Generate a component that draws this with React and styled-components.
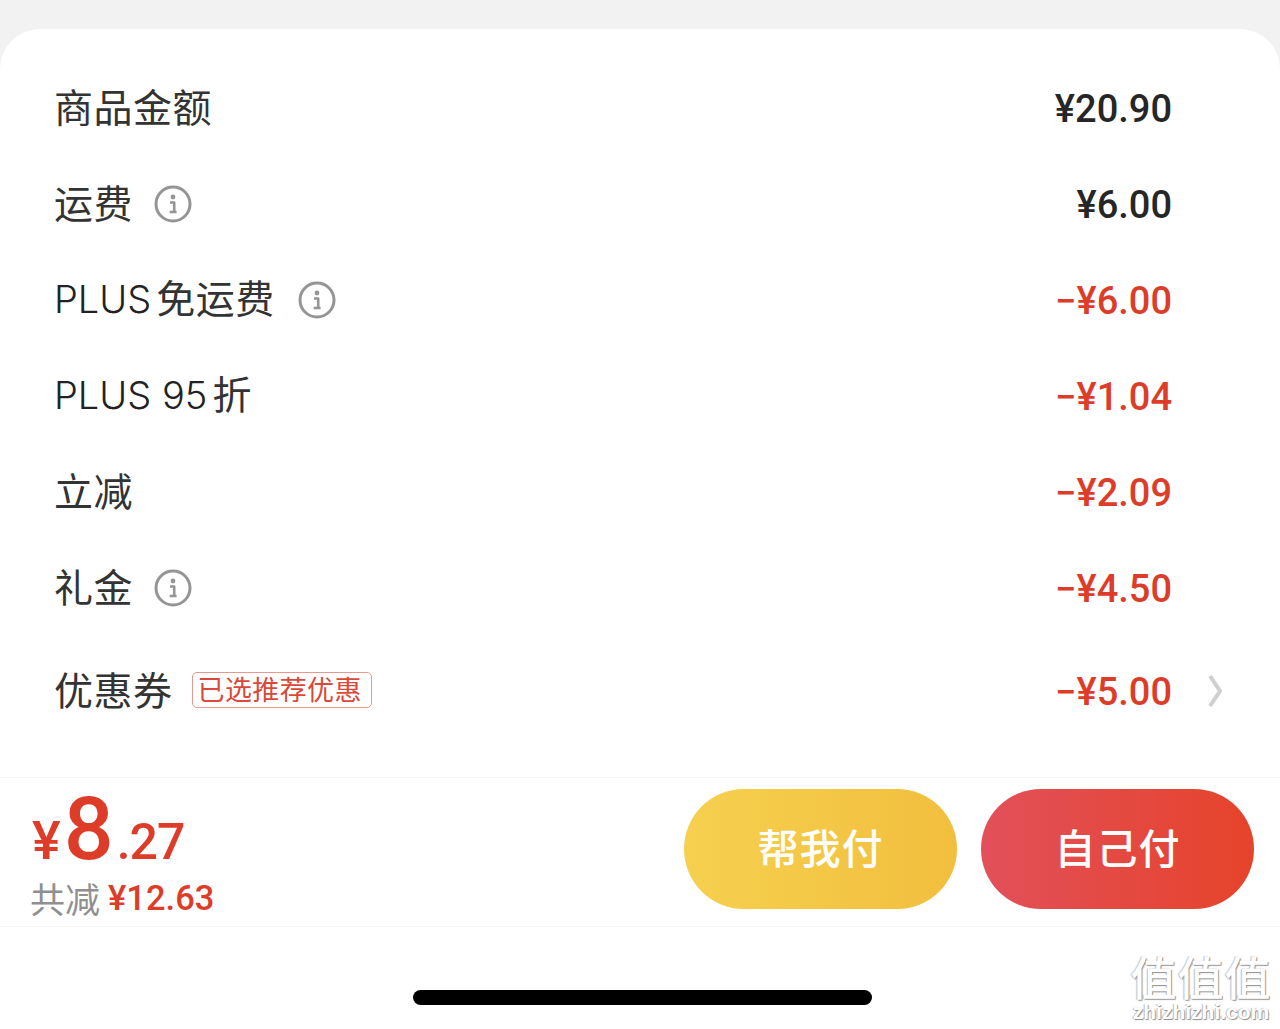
import React from "react"
import styled, { createGlobalStyle } from "styled-components"

const CJK = `"Noto Sans CJK SC", "Noto Sans", sans-serif`
const NUM = `Roboto, "Liberation Sans", sans-serif`
const RED = "#dd3d28"

const Global = createGlobalStyle`
  html, body { margin: 0; padding: 0; background: #f2f2f2; }
  body { width: 1280px; height: 1029px; overflow: hidden; font-family: ${CJK}; }
`

const Page = styled.div`
  position: relative;
  width: 1280px;
  height: 1029px;
  padding-top: 29px;
  box-sizing: border-box;
`

const Sheet = styled.div`
  height: 1000px;
  background: #fff;
  border-radius: 40px 40px 0 0;
  display: flex;
  flex-direction: column;
`

const List = styled.div`
  height: 748px;
  padding-top: 31px;
  box-sizing: border-box;
`

const Row = styled.div`
  height: ${p => (p.$tall ? 110 : 96)}px;
  display: flex;
  align-items: center;
  padding: 0 108px 0 54px;
  position: relative;
`

const Label = styled.span`
  font-size: 39px;
  font-weight: 400;
  line-height: 48px;
  letter-spacing: 0.5px;
  padding-bottom: 6px;
  color: #333;
`

const Latin = styled.span`
  font-family: Inter, sans-serif;
  font-size: 38px;
  font-weight: 300;
  letter-spacing: 0;
  color: #222;
  margin-right: 5px;
`

const InfoWrap = styled.span`
  display: flex;
  margin-left: ${p => p.$gap}px;
`

const Tag = styled.span`
  margin: 0 0 3px 19px;
  height: 36px;
  width: 180px;
  box-sizing: border-box;
  border: 1px solid #e8998d;
  border-radius: 5px;
  padding-left: 5px;
  color: #d9493a;
  font-size: 27px;
  font-weight: 400;
  line-height: 32px;
  letter-spacing: 0.4px;
  white-space: nowrap;
`

const Amount = styled.span`
  margin-left: auto;
  padding-top: 2px;
  font-family: ${NUM};
  font-size: 38px;
  font-weight: 500;
  line-height: 48px;
  color: ${p => (p.$red ? RED : "#262626")};
`

const Chevron = styled.svg`
  position: absolute;
  right: 57px;
  top: 38px;
`

const Bar = styled.div`
  height: 150px;
  box-sizing: border-box;
  border-top: 1px solid #f5f5f5;
  border-bottom: 1px solid #f5f5f5;
  display: flex;
  align-items: flex-start;
  padding: 11px 26px 0 30px;
`

const Totals = styled.div`
  display: flex;
  flex-direction: column;
  margin-top: -6px;
`

const Price = styled.div`
  display: flex;
  align-items: baseline;
  color: ${RED};
  font-family: ${NUM};
  font-weight: 500;
  height: 95px;
  padding-left: 2px;
`

const PriceYen = styled.span`
  font-size: 54px;
  line-height: 92px;
`

const PriceBig = styled.span`
  font-size: 88px;
  line-height: 92px;
  margin-left: 3px;
`

const PriceSmall = styled.span`
  font-size: 50px;
  line-height: 92px;
  letter-spacing: -1px;
  margin-left: 3px;
`

const Saved = styled.div`
  display: flex;
  align-items: center;
  height: 40px;
`

const SavedLabel = styled.span`
  font-size: 35px;
  font-weight: 400;
  color: #8f8f8f;
  line-height: 40px;
`

const SavedValue = styled.span`
  margin-left: 8px;
  font-family: ${NUM};
  font-size: 34.5px;
  font-weight: 500;
  color: ${RED};
  line-height: 40px;
`

const Actions = styled.div`
  margin-left: auto;
  display: flex;
  gap: 24px;
`

const PayButton = styled.button`
  width: 273px;
  height: 120px;
  border: 0;
  border-radius: 60px;
  padding: 0 0 6px;
  color: #fff;
  font-family: ${CJK};
  font-size: 41px;
  font-weight: 500;
  letter-spacing: 1px;
  background: ${p =>
    p.$yellow
      ? "linear-gradient(90deg, #f6d04f, #f2be3e)"
      : "linear-gradient(90deg, #e2505a, #e6432a)"};
`

const Bottom = styled.div`
  flex: 1;
  background: #fff;
`

const HomeIndicator = styled.div`
  position: absolute;
  left: 413px;
  top: 990px;
  width: 459px;
  height: 15px;
  border-radius: 8px;
  background: #000;
`

const Watermark = styled.div`
  position: absolute;
  right: 8px;
  bottom: 5px;
  width: 142px;
  text-align: center;
  color: #fff;
  text-shadow: 1px 1px 1px #8d8d8d, -1px 0 1px #bdbdbd;
`

const WatermarkMark = styled.div`
  font-size: 46px;
  font-weight: 500;
  line-height: 50px;
  letter-spacing: 1px;
  white-space: nowrap;
`

const WatermarkUrl = styled.div`
  font-family: "Liberation Sans", sans-serif;
  font-size: 21px;
  font-weight: 700;
  line-height: 24px;
  white-space: nowrap;
`

const InfoIcon = () => (
  <svg width="38" height="38" viewBox="0 0 38 38" fill="none">
    <circle cx="19" cy="19" r="17" stroke="#959595" strokeWidth="3" />
    <circle cx="19" cy="12" r="2.4" fill="#959595" />
    <path
      d="M16 17.5h4.2v8.2M15.6 27h7"
      stroke="#959595"
      strokeWidth="2.6"
      strokeLinejoin="round"
    />
  </svg>
)

const rows = [
  { label: "商品金额", amount: "¥20.90" },
  { label: "运费", amount: "¥6.00", infoGap: 21 },
  { latin: "PLUS", label: "免运费", amount: "−¥6.00", infoGap: 23, red: true },
  { latin: "PLUS 95", label: "折", amount: "−¥1.04", red: true },
  { label: "立减", amount: "−¥2.09", red: true },
  { label: "礼金", amount: "−¥4.50", infoGap: 21, red: true },
]

export default function App() {
  return (
    <Page>
      <Global />
      <Sheet>
        <List>
          {rows.map(r => (
            <Row key={r.amount + r.label}>
              <Label>
                {r.latin && <Latin>{r.latin}</Latin>}
                {r.label}
              </Label>
              {r.infoGap && (
                <InfoWrap $gap={r.infoGap}>
                  <InfoIcon />
                </InfoWrap>
              )}
              <Amount $red={r.red}>{r.amount}</Amount>
            </Row>
          ))}
          <Row $tall>
            <Label>优惠券</Label>
            <Tag>已选推荐优惠</Tag>
            <Amount $red>−¥5.00</Amount>
            <Chevron width="16" height="34" viewBox="0 0 16 34" fill="none">
              <path d="M3 2l10 15L3 32" stroke="#cfcfcf" strokeWidth="4" />
            </Chevron>
          </Row>
        </List>
        <Bar>
          <Totals>
            <Price>
              <PriceYen>¥</PriceYen>
              <PriceBig>8</PriceBig>
              <PriceSmall>.27</PriceSmall>
            </Price>
            <Saved>
              <SavedLabel>共减</SavedLabel>
              <SavedValue>¥12.63</SavedValue>
            </Saved>
          </Totals>
          <Actions>
            <PayButton $yellow>帮我付</PayButton>
            <PayButton>自己付</PayButton>
          </Actions>
        </Bar>
        <Bottom />
      </Sheet>
      <HomeIndicator />
      <Watermark>
        <WatermarkMark>值值值</WatermarkMark>
        <WatermarkUrl>zhizhizhi.com</WatermarkUrl>
      </Watermark>
    </Page>
  )
}
